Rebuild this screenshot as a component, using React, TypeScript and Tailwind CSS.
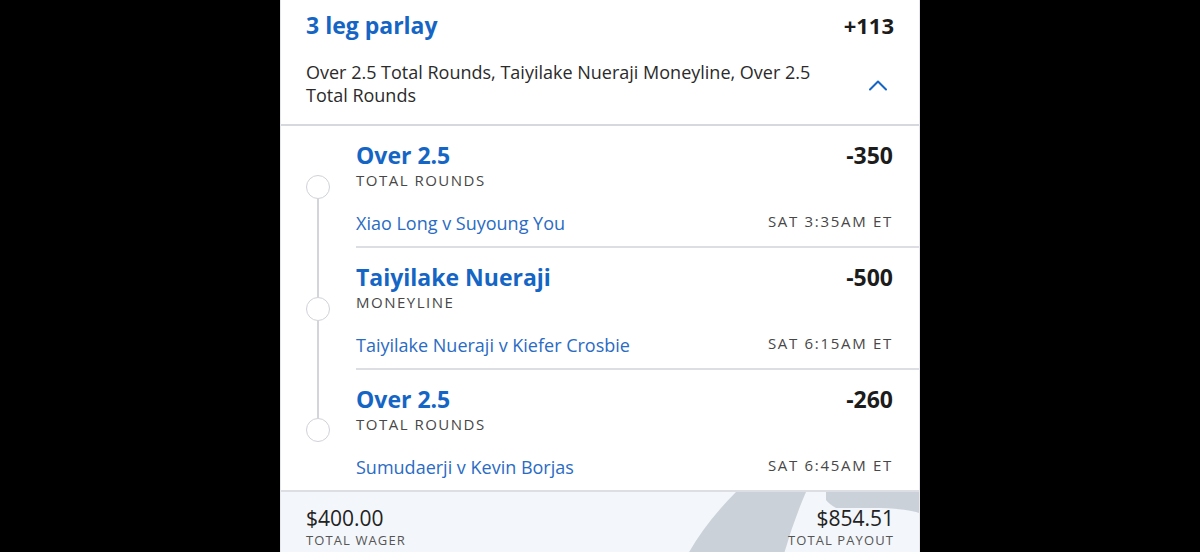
import React from "react";

type Leg = {
  title: string;
  market: string;
  match: string;
  time: string;
  odds: string;
};

const legs: Leg[] = [
  { title: "Over 2.5", market: "TOTAL ROUNDS", match: "Xiao Long v Suyoung You", time: "SAT 3:35AM ET", odds: "-350" },
  { title: "Taiyilake Nueraji", market: "MONEYLINE", match: "Taiyilake Nueraji v Kiefer Crosbie", time: "SAT 6:15AM ET", odds: "-500" },
  { title: "Over 2.5", market: "TOTAL ROUNDS", match: "Sumudaerji v Kevin Borjas", time: "SAT 6:45AM ET", odds: "-260" },
];

function LegRow({ leg, index, total }: { leg: Leg; index: number; total: number }) {
  const first = index === 0;
  const last = index === total - 1;
  return (
    <div className={`flex ${last ? "h-[120px]" : "h-[122px]"}`}>
      <div className="w-[75px] flex flex-col items-center pr-[1px] shrink-0">
        <div className={`w-[2px] flex-1 ${first ? "bg-transparent" : "bg-[#d3d5db]"}`} />
        <div className="w-[24px] h-[24px] rounded-full border-[1.5px] border-[#cfd2d8] bg-white shrink-0" />
        <div className={`w-[2px] flex-1 ${last ? "bg-transparent" : "bg-[#d3d5db]"}`} />
      </div>
      <div className={`flex-1 pr-[26px] pt-[16px] ${last ? "" : "border-b-2 border-[#dcdee4]"}`}>
        <div className="flex justify-between items-start">
          <div className="text-[23px] leading-[27px] font-bold text-[#1565c5]">{leg.title}</div>
          <div className="text-[23px] leading-[27px] font-bold text-[#1c1c1c]">{leg.odds}</div>
        </div>
        <div className="text-[15px] leading-[20px] tracking-[1.5px] text-[#474747] mt-[1px]">{leg.market}</div>
        <div className="flex justify-between items-end mt-[20px]">
          <div className="text-[18px] leading-[24px] text-[#2a6bc3]">{leg.match}</div>
          <div className="text-[15px] leading-[22px] tracking-[1.7px] text-[#474747] mb-[3px]">{leg.time}</div>
        </div>
      </div>
    </div>
  );
}

export default function App() {
  return (
    <div className="w-full h-[552px] bg-black flex justify-center overflow-hidden" style={{ fontFamily: "'Open Sans', Lato, sans-serif" }}>
      <div className="w-[640px] h-full bg-white border-x border-[#e6e7ec] flex flex-col">
        <div className="h-[126px] px-[25px] pt-[10px] border-b-2 border-[#d6d8e0] shrink-0">
          <div className="flex justify-between items-start">
            <div className="text-[23px] leading-[30px] font-bold text-[#1565c5]">3 leg parlay</div>
            <div className="text-[22px] leading-[30px] font-bold text-[#1c1c1c]">+113</div>
          </div>
          <div className="flex justify-between items-center mt-[21px]">
            <div className="max-w-[520px] text-[18px] leading-[23px] text-[#2b2b2b]">
              Over 2.5 Total Rounds, Taiyilake Nueraji Moneyline, Over 2.5 Total Rounds
            </div>
            <svg width="20" height="12" viewBox="0 0 20 12" className="mr-[6px] mt-[2px]">
              <path d="M2 10.5 L10 2.5 L18 10.5" fill="none" stroke="#1565c5" strokeWidth="2" strokeLinecap="round" strokeLinejoin="round" />
            </svg>
          </div>
        </div>
        <div className="flex flex-col shrink-0">
          {legs.map((leg, i) => (
            <LegRow key={i} leg={leg} index={i} total={legs.length} />
          ))}
        </div>
        <div className="relative flex-1 bg-[#f3f6fa] border-t-2 border-[#dcdee4] overflow-hidden">
          <svg className="absolute inset-0" width="640" height="62" viewBox="0 0 640 62">
            <path d="M455 0 Q425 30 407 62 L503 62 Q512 30 525 0 Z" fill="#cbd1d9" />
            <path d="M545 0 L640 0 L640 22 Q630 17 600 16 L555 16 Q548 12 545 8 Z" fill="#cbd1d9" />
          </svg>
          <div className="relative flex justify-between px-[25px] pt-[13px]">
            <div>
              <div className="text-[21px] leading-[26px] text-[#222]">$400.00</div>
              <div className="text-[13px] leading-[18px] tracking-[1.1px] text-[#555]">TOTAL WAGER</div>
            </div>
            <div className="text-right">
              <div className="text-[21px] leading-[26px] text-[#222]">$854.51</div>
              <div className="text-[13px] leading-[18px] tracking-[1.1px] text-[#555]">TOTAL PAYOUT</div>
            </div>
          </div>
        </div>
      </div>
    </div>
  );
}
